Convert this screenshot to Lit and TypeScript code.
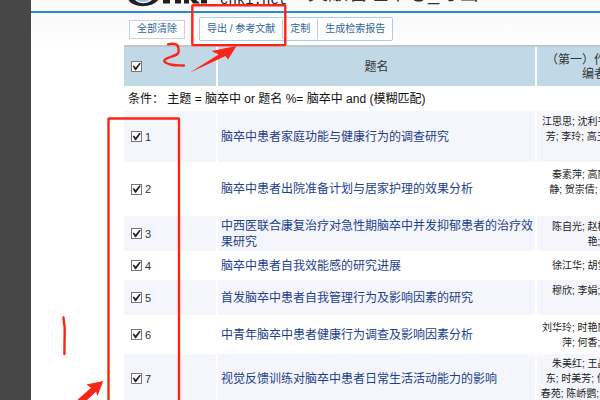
import { LitElement, html, css, svg } from "lit";
import { customElement } from "lit/decorators.js";

interface Paper {
  title: string;
  size: string;
  authors: string[];
}

const papers: Paper[] = [
  { title: "脑卒中患者家庭功能与健康行为的调查研究", size: "h51", authors: ["江思思; 沈利平; 秦丽丽;", "芳; 李玲; 高玉芳; 王英", "\u00a0"] },
  { title: "脑卒中患者出院准备计划与居家护理的效果分析", size: "h54", authors: ["秦素萍; 高丽君; 李;", "静; 贺崇倩; 王英; 李;", "\u00a0"] },
  { title: "中西医联合康复治疗对急性期脑卒中并发抑郁患者的治疗效果研究", size: "h35", authors: ["陈自光; 赵梅英; 王;", "艳;"] },
  { title: "脑卒中患者自我效能感的研究进展", size: "h29", authors: ["徐江华; 胡雪英; 李;"] },
  { title: "首发脑卒中患者自我管理行为及影响因素的研究", size: "h35", authors: ["穆欣; 李娟; 王丽丽;", "\u00a0"] },
  { title: "中青年脑卒中患者健康行为调查及影响因素分析", size: "h39", authors: ["刘华玲; 时艳丽; 王丽丽;", "萍; 何香; 李英;"] },
  { title: "视觉反馈训练对脑卒中患者日常生活活动能力的影响", size: "h49", authors: ["朱美红; 王晶晶; 李;", "东; 时美芳; 何丽; 王英", "春苑; 陈峤鹦; 李丽丽; 王"] },
];

@customElement("app-root")
export class AppRoot extends LitElement {
  static styles = css`
    :host {
      display: block;
      font-family: "Liberation Sans", "Noto Sans CJK SC", sans-serif;
      font-size: 12px;
      color: #222;
    }
    .page {
      position: relative;
      display: grid;
      grid-template-columns: 31px minmax(0, 1fr);
      height: 100vh;
      overflow: hidden;
      background: #fff;
    }
    .side { background: #474747; }
    .main { min-width: 0; }
    header {
      display: flex;
      align-items: flex-end;
      height: 11px;
      padding-left: 97px;
      background: #f9f9f9;
      border-bottom: 2px solid #2f87d2;
      overflow: hidden;
    }
    .logo { flex: none; width: 92px; height: 11px; }
    .domain {
      flex: none;
      width: 88px;
      font: 14px/18px "Liberation Mono", monospace;
      padding-bottom: 2px;
      color: #222;
    }
    h1 {
      margin: 0;
      font-size: 20px;
      line-height: 24px;
      font-weight: 400;
      padding-bottom: 6px;
      color: #333;
      white-space: nowrap;
    }
    .tools {
      display: flex;
      align-items: center;
      gap: 14px;
      height: 32px;
      padding: 0 0 0 98px;
      background: linear-gradient(#f9f9f9, #fff);
    }
    button {
      font: inherit;
      font-size: 10px;
      line-height: 14px;
      margin: 0;
      padding: 0;
      color: #35669c;
      background: #fff;
      border: 0;
      white-space: nowrap;
    }
    .clear { width: 56px; height: 19px; border: 1px solid #ccd3da; }
    .group {
      display: flex;
      align-items: center;
      height: 22px;
      border: 1px solid #abcfea;
      border-radius: 2px;
      background: #fff;
    }
    .group button { padding: 0 7px; height: 20px; }
    .group button + button { border-left: 1px solid #c5ccd3; }
    .list { padding-left: 93px; }
    table {
      width: calc(100% + 51px);
      table-layout: fixed;
      border-collapse: separate;
      border-spacing: 0;
      border-top: 2px solid #c3c6c9;
    }
    .c1 { width: 94px; }
    .c3 { width: 114px; }
    th, td { padding: 0; font-weight: 400; vertical-align: middle; border-right: 2px solid #fff; }
    th:last-child, td:last-child { border-right: 0; }
    th { height: 39px; background: #c1d9e6; color: #333; line-height: 14px; }
    .cond { height: 25px; padding-left: 4px; line-height: 16px; color: #111; }
    .odd td { background: #f5f6fb; }
    .h29 td { height: 29px; }
    .h35 td { height: 35px; }
    .h39 td { height: 39px; }
    .h49 td { height: 49px; }
    .h51 td { height: 51px; }
    .h54 td { height: 54px; }
    label { display: flex; align-items: center; gap: 3px; padding-left: 7px; font-size: 11px; line-height: 14px; color: #333; }
    input {
      appearance: none;
      flex: none;
      box-sizing: border-box;
      width: 11px;
      height: 11px;
      margin: 0;
      border: 1px solid #777;
      background: #fff;
    }
    input:checked::before {
      content: "";
      display: block;
      width: 9px;
      height: 9px;
      background: #222;
      clip-path: polygon(8% 46%, 22% 40%, 40% 62%, 84% 8%, 98% 16%, 44% 92%, 34% 92%);
    }
    .title { padding-left: 3px; line-height: 16px; }
    a { color: #1c3f8f; text-decoration: none; }
    .authors { font-size: 10px; line-height: 15px; text-align: center; white-space: nowrap; }
    .marks { position: absolute; left: 0; top: 0; width: 600px; height: 402px; pointer-events: none; }
  `;

  private row(p: Paper, i: number) {
    return html`<tr class="${p.size} ${i % 2 ? "" : "odd"}">
      <td><label><input type="checkbox" checked />${i + 1}</label></td>
      <td class="title"><a href="#">${p.title}</a></td>
      <td class="authors">${p.authors.map((a) => html`<div>${a}</div>`)}</td>
    </tr>`;
  }

  private marks() {
    return svg`<g fill="none" stroke="#fb2418" stroke-width="2.4" stroke-linecap="round" stroke-linejoin="round">
        <rect x="192.3" y="5.3" width="93" height="39.8" rx="1" />
        <path d="M108.5 404V119q0-.5.5-.5h69.500q.5 0 .5.500V404" />
        <path d="M168 44.300c4-1 9-.6 10 2 .8 3 1.500 6-.5 7.700-3 2.500-10 3-13 6-1 2 2 3.500 6 4.500 4 1.200 9 .6 13.500 1" />
        <path d="M63.500 317.500c0 4 1.200 7 1.200 12l-.3 24.500" />
      </g>
      <g fill="#fb2418">
        <path d="M190 72.600L218.500 54.500 211.500 51 236.500 46 228 59.500 225.500 56z" />
        <path d="M75 402L91 387.800 86.500 384.500 103.200 381 97.500 396 96 391.700 85 402z" />
      </g>`;
  }

  render() {
    return html`<div class="page">
      <div class="side"></div>
      <div class="main">
        <header>
          <svg class="logo" viewBox="128 0 92 11" aria-label="CNKI">
            <ellipse cx="143" cy="-1" rx="7" ry="3" fill="#8cc6e8" />
            <path d="M128 -1C132 8 152 9 159 -1L153 -1C148 4.500 139 5 134 -1z" fill="#231f20" />
            <path d="M163 -1h7v4.500h-7zM175 -1h6v4.500h-6zM184 -1h5v4.500h-5zM190 -1h5l5 4.500h-7zM201 -1h6v4.500h-6z" fill="#231f20" />
          </svg>
          <span class="domain">cnki.net</span>
          <h1>文献管理中心_导出</h1>
        </header>
        <div class="tools">
          <button class="clear">全部清除</button>
          <div class="group">
            <button>导出 / 参考文献</button><button>定制</button><button>生成检索报告</button>
          </div>
        </div>
        <div class="list">
          <table>
            <colgroup><col class="c1" /><col /><col class="c3" /></colgroup>
            <thead>
              <tr>
                <th><label><input type="checkbox" aria-label="全选" checked /></label></th>
                <th>题名</th>
                <th>（第一）作者／主<br />编者</th>
              </tr>
            </thead>
            <tbody>
              <tr><td class="cond" colspan="3">条件： 主题 = 脑卒中 or 题名 %= 脑卒中 and (模糊匹配)</td></tr>
              ${papers.map((p, i) => this.row(p, i))}
            </tbody>
          </table>
        </div>
      </div>
      <svg class="marks" viewBox="0 0 600 402" aria-hidden="true">${this.marks()}</svg>
    </div>`;
  }
}
